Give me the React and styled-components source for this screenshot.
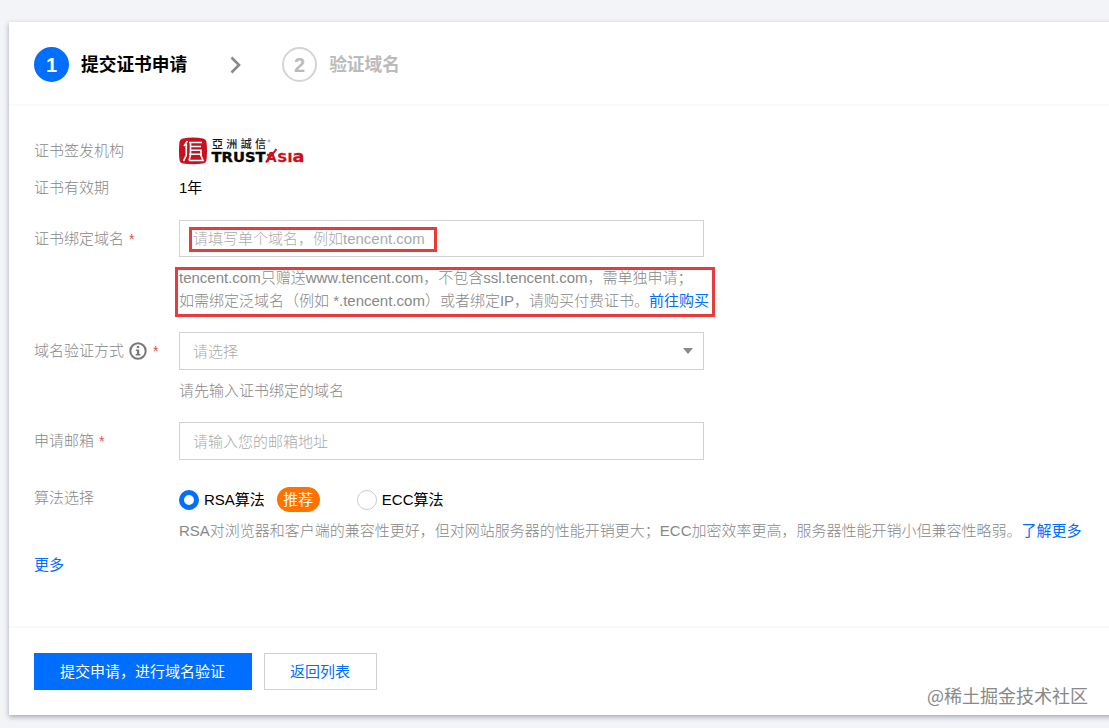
import React from 'react';
import styled, { createGlobalStyle } from 'styled-components';

const BLUE = '#006eff';

const GlobalStyle = createGlobalStyle`
  * { box-sizing: border-box; }
  body {
    margin: 0;
    background: #f2f4f8;
    font-family: "Liberation Sans", "Noto Sans CJK SC", sans-serif;
    font-size: 15px;
    font-weight: 300;
    color: #000;
    overflow: hidden;
  }
`;

const Page = styled.div`
  height: 728px;
  padding: 22px 0 13px 9px;
  overflow: hidden;
`;

const Card = styled.main`
  position: relative;
  display: flex;
  flex-direction: column;
  width: 1130px;
  height: 693px;
  background: #fff;
  box-shadow: 0 2px 5px rgba(54, 58, 80, 0.42);
`;

const Steps = styled.header`
  display: flex;
  align-items: center;
  height: 84px;
  padding: 2px 25px 0;
  border-bottom: 2px solid #f9fafa;
`;

const StepNumber = styled.span`
  display: flex;
  align-items: center;
  justify-content: center;
  width: 35px;
  height: 35px;
  margin-right: 12px;
  padding-top: 1px;
  border-radius: 50%;
  border: 2px solid ${(p) => (p.$active ? BLUE : '#d4d4d4')};
  background: ${(p) => (p.$active ? BLUE : '#fff')};
  color: ${(p) => (p.$active ? '#fff' : '#bbb')};
  font-size: 20px;
  font-weight: 700;
  line-height: 1;
`;

const StepTitle = styled.span`
  padding-top: 2px;
  color: ${(p) => (p.$active ? '#000' : '#bbb')};
  font-size: 17.7px;
  font-weight: 700;
  line-height: 24px;
`;

const Chevron = styled.svg`
  display: block;
  width: 12px;
  height: 18px;
  margin: 2px 40px 0 43px;
`;

const Form = styled.section`
  display: flex;
  flex-direction: column;
  height: 522px;
  padding: 26px 25px 0;
  border-bottom: 2px solid #f9fafa;
`;

const Row = styled.div`
  display: grid;
  grid-template-columns: 145px 1fr;
  height: ${(p) => p.$height}px;
`;

const Label = styled.label`
  display: flex;
  align-items: center;
  height: ${(p) => p.$height || 35}px;
  color: #888;
  white-space: nowrap;
`;

const Required = styled.span`
  margin-left: 5px;
  padding-top: 3px;
  color: #e1504a;
  font-size: 14px;
`;

const InfoIcon = styled.svg`
  width: 18px;
  height: 18px;
  margin: 2px 1px 0 5px;
`;

const Value = styled.div`
  font-weight: 400;
  line-height: 37px;
`;

const Logo = styled.svg`
  display: block;
  width: 128px;
  height: 28px;
  margin-top: 5px;
`;

const Field = styled.div`
  position: relative;
  display: flex;
  align-items: center;
  justify-content: space-between;
  width: 525px;
  height: ${(p) => p.$height || 38}px;
  padding: 0 10px 2px 13px;
  border: 1px solid #cfd2d5;
  color: #aaa;
`;

const Caret = styled.svg`
  width: 10px;
  height: 6px;
  margin-top: 2px;
`;

const Hint = styled.p`
  margin: ${(p) => p.$top}px 0 0;
  color: #888;
  line-height: 23px;
  white-space: nowrap;
`;

const MarkedHint = styled.div`
  position: relative;
  margin-top: 9px;
`;

const Link = styled.a`
  color: ${BLUE};
  font-weight: 400;
  text-decoration: none;
`;

const FieldMark = styled.div`
  position: absolute;
  left: 9px;
  top: 6px;
  width: 248px;
  height: 25px;
  border: 3px solid #e83b3b;
`;

const HintMark = styled.div`
  position: absolute;
  left: -4px;
  top: 1px;
  width: 540px;
  height: 50px;
  border: 3px solid #e83b3b;
`;

const Options = styled.div`
  display: flex;
  align-items: center;
  height: 25px;
`;

const OptionText = styled.span`
  font-weight: 400;
  padding-bottom: 2px;
`;

const Radio = styled.span`
  width: 20px;
  height: 20px;
  margin-right: 5px;
  border-radius: 50%;
  border: ${(p) => (p.$checked ? `5px solid ${BLUE}` : '1px solid #ccc')};
`;

const Badge = styled.span`
  width: 43px;
  margin: 0 37px 0 12px;
  border-radius: 13px;
  background: #ff7200;
  color: #fff;
  font-weight: 400;
  line-height: 25px;
  text-align: center;
`;

const More = styled(Link)`
  margin-top: 1px;
  line-height: 25px;
`;

const Actions = styled.footer`
  display: flex;
  gap: 12px;
  padding: 25px 25px 0;
`;

const Button = styled.button`
  width: ${(p) => p.$width}px;
  height: 37px;
  padding: 0 1px 0 0;
  border: 1px solid ${(p) => (p.$primary ? BLUE : '#cfd2d5')};
  background: ${(p) => (p.$primary ? BLUE : '#fff')};
  color: ${(p) => (p.$primary ? '#fff' : BLUE)};
  font: inherit;
  font-weight: 400;
  line-height: 35px;
`;

const Watermark = styled.span`
  position: absolute;
  left: 918px;
  bottom: 6px;
  color: #888;
  font-family: "Noto Sans CJK SC", sans-serif;
  font-size: 18px;
  font-weight: 400;
  line-height: 27px;
  white-space: nowrap;
`;

function TrustAsiaLogo() {
  return (
    <Logo viewBox="0 0 128 28" role="img" aria-label="TrustAsia">
      <path
        d="M4 1.5 Q14 -0.5 24 1.5 Q27 2 27.5 5 Q28.5 14 27.5 23 Q27 26 24 26.5 Q14 28 4 26.5 Q1 26 .5 23 Q-.5 14 .5 5 Q1 2 4 1.5Z"
        fill="#c8101e"
      />
      <path
        d="M8.5 4 L5 9 M7.3 7 V18 L4.5 24.2 M10 5.5 H23 M11.5 9.5 H22 M11.5 13.2 H22 V17 M11.5 5.5 V18 L10 23.5 M10 17.2 H23 M21.5 17.2 L24 23.5 H10"
        fill="none"
        stroke="#fff"
        strokeWidth="1.6"
      />
      <text x="33" y="11" fontFamily="Noto Sans CJK TC, sans-serif" fontSize="11" fontWeight="500" textLength="54" lengthAdjust="spacing" fill="#111">亞洲誠信</text>
      <circle cx="90" cy="4" r="1.1" fill="none" stroke="#777" strokeWidth=".6" />
      <g fontFamily="DejaVu Sans, sans-serif" fontWeight="700">
        <g transform="translate(32.5 25.3) scale(1.06 1)">
          <text fontSize="13.6" textLength="51" lengthAdjust="spacingAndGlyphs" fill="#050505" stroke="#050505" strokeWidth=".3">TRUST</text>
        </g>
        <text x="86.8" y="25.3" fontSize="14" textLength="11" lengthAdjust="spacingAndGlyphs" fill="#c8101e">A</text>
        <g fill="#c8101e" stroke="#c8101e" strokeWidth=".3">
          <text x="98.3" y="25.3" fontSize="12.5" textLength="10" lengthAdjust="spacingAndGlyphs">S</text>
          <text x="108.6" y="25.3" fontSize="12.5" textLength="5" lengthAdjust="spacingAndGlyphs">I</text>
          <text x="113.6" y="25.3" fontSize="15.5" textLength="12" lengthAdjust="spacingAndGlyphs">a</text>
        </g>
      </g>
      <path d="M87 25.3 L97.5 12 M88 17.5 L91.5 19" stroke="#c8101e" strokeWidth="2" fill="none" />
    </Logo>
  );
}

export default function App() {
  return (
    <>
      <GlobalStyle />
      <Page>
        <Card>
          <Steps>
            <StepNumber $active>1</StepNumber>
            <StepTitle $active>提交证书申请</StepTitle>
            <Chevron viewBox="0 0 12 18">
              <path d="M1.5 1.5 L9 9 L1.5 16.5" fill="none" stroke="#888" strokeWidth="2.6" />
            </Chevron>
            <StepNumber>2</StepNumber>
            <StepTitle>验证域名</StepTitle>
          </Steps>

          <Form>
            <Row $height={37}>
              <Label>证书签发机构</Label>
              <TrustAsiaLogo />
            </Row>
            <Row $height={51}>
              <Label>证书有效期</Label>
              <Value>1年</Value>
            </Row>
            <Row $height={112}>
              <Label $height={34}>证书绑定域名<Required>*</Required></Label>
              <div>
                <Field $height={37}>
                  请填写单个域名，例如tencent.com
                  <FieldMark />
                </Field>
                <MarkedHint>
                  <Hint $top={0}>
                    tencent.com只赠送www.tencent.com，不包含ssl.tencent.com，需单独申请；
                    <br />
                    如需绑定泛域名（例如 *.tencent.com）或者绑定IP，请购买付费证书。
                    <Link>前往购买</Link>
                  </Hint>
                  <HintMark />
                </MarkedHint>
              </div>
            </Row>
            <Row $height={90}>
              <Label>
                域名验证方式
                <InfoIcon viewBox="0 0 18 18">
                  <circle cx="9" cy="9" r="7.7" fill="none" stroke="#777" strokeWidth="2" />
                  <path d="M7.8 4 H10.2 V6 H7.8Z M6.8 7.5 H10.2 V12 H11.4 V13.4 H6.6 V12 H7.9 V8.9 H6.8Z" fill="#777" />
                </InfoIcon>
                <Required>*</Required>
              </Label>
              <div>
                <Field>
                  请选择
                  <Caret viewBox="0 0 10 6">
                    <path d="M0 0 H10 L5 6Z" fill="#888" />
                  </Caret>
                </Field>
                <Hint $top={9}>请先输入证书绑定的域名</Hint>
              </div>
            </Row>
            <Row $height={65}>
              <Label>申请邮箱<Required>*</Required></Label>
              <Field>请输入您的邮箱地址</Field>
            </Row>
            <Row $height={64}>
              <Label $height={19}>算法选择</Label>
              <div>
                <Options>
                  <Radio $checked />
                  <OptionText>RSA算法</OptionText>
                  <Badge>推荐</Badge>
                  <Radio />
                  <OptionText>ECC算法</OptionText>
                </Options>
                <Hint $top={7}>
                  RSA对浏览器和客户端的兼容性更好，但对网站服务器的性能开销更大；ECC加密效率更高，服务器性能开销小但兼容性略弱。
                  <Link>了解更多</Link>
                </Hint>
              </div>
            </Row>
            <More>更多</More>
          </Form>

          <Actions>
            <Button $primary $width={218}>提交申请，进行域名验证</Button>
            <Button $width={113}>返回列表</Button>
          </Actions>
          <Watermark>@稀土掘金技术社区</Watermark>
        </Card>
      </Page>
    </>
  );
}
